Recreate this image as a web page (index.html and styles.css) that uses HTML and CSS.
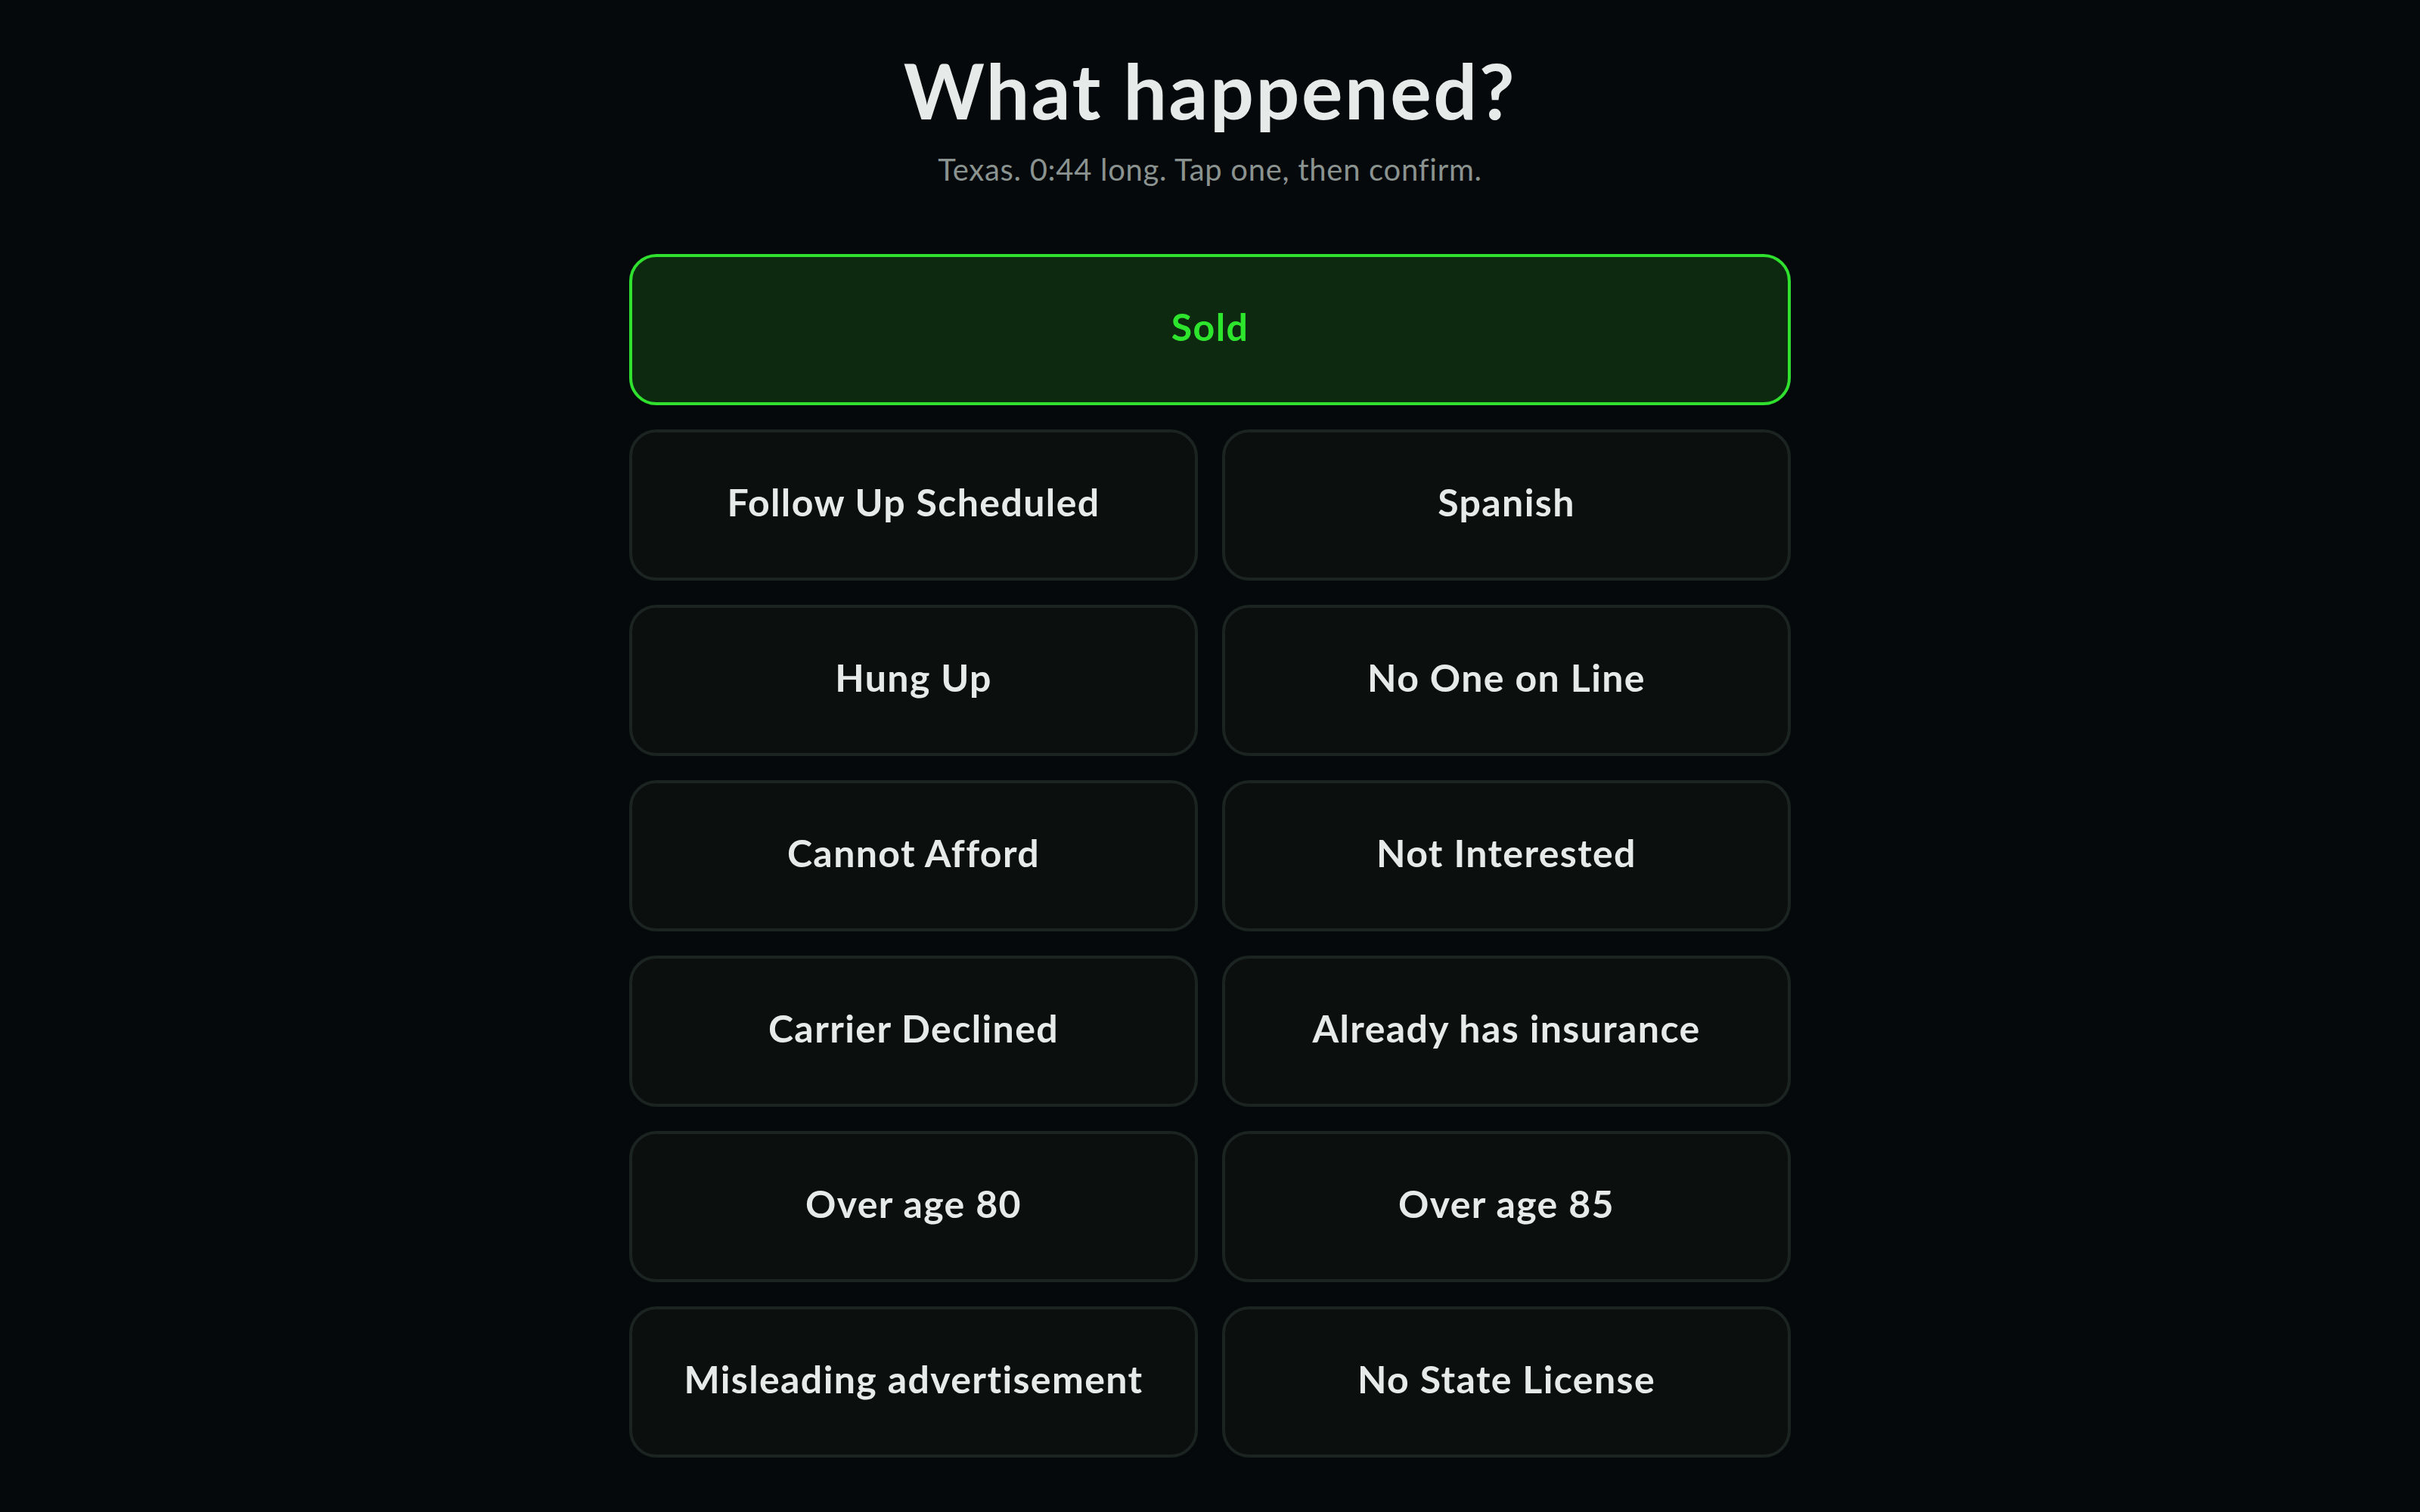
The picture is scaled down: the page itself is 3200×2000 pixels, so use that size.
FILE: index.html
```html
<!DOCTYPE html>
<html lang="en">
<head>
<meta charset="utf-8">
<title>What happened?</title>
<link rel="stylesheet" href="styles.css">
</head>
<body>
<main class="page">
  <header class="head">
    <h1 class="title">What happened?</h1>
    <p class="subtitle">Texas. 0:44 long. Tap one, then confirm.</p>
  </header>
  <div class="options">
    <button class="opt opt-wide opt-selected">Sold</button>
    <button class="opt">Follow Up Scheduled</button>
    <button class="opt">Spanish</button>
    <button class="opt">Hung Up</button>
    <button class="opt">No One on Line</button>
    <button class="opt">Cannot Afford</button>
    <button class="opt">Not Interested</button>
    <button class="opt">Carrier Declined</button>
    <button class="opt">Already has insurance</button>
    <button class="opt">Over age 80</button>
    <button class="opt">Over age 85</button>
    <button class="opt">Misleading advertisement</button>
    <button class="opt">No State License</button>
  </div>
</main>
</body>
</html>
```

FILE: styles.css
```css
html, body {
  margin: 0;
  padding: 0;
  background: #05090b;
}
body {
  font-family: Lato, "Open Sans", "Liberation Sans", sans-serif;
  color: #e6eae9;
}
.page {
  width: 1536px;
  margin: 0 auto;
  padding-top: 58px;
}
.head {
  text-align: center;
}
.title {
  margin: 0;
  font-size: 102px;
  line-height: 122px;
  font-weight: 700;
  letter-spacing: 2.6px;
  color: #e6eae9;
}
.subtitle {
  margin: 20px 0 0;
  font-size: 40px;
  line-height: 48px;
  font-weight: 400;
  letter-spacing: 0.7px;
  color: #8b9390;
}
.options {
  margin-top: 88px;
  display: grid;
  grid-template-columns: 1fr 1fr;
  gap: 32px;
}
.opt {
  height: 200px;
  box-sizing: border-box;
  display: flex;
  align-items: center;
  justify-content: center;
  padding: 0 0 8px;
  background: #0b0f0e;
  border: 4px solid #1c2422;
  border-radius: 36px;
  font-family: inherit;
  font-size: 50px;
  font-weight: 700;
  letter-spacing: 1.4px;
  color: #e6eae9;
  cursor: pointer;
}
.opt-wide {
  grid-column: 1 / -1;
}
.opt-selected {
  background: #0d2a10;
  border-color: #2fe02f;
  color: #2ee52e;
}
```
